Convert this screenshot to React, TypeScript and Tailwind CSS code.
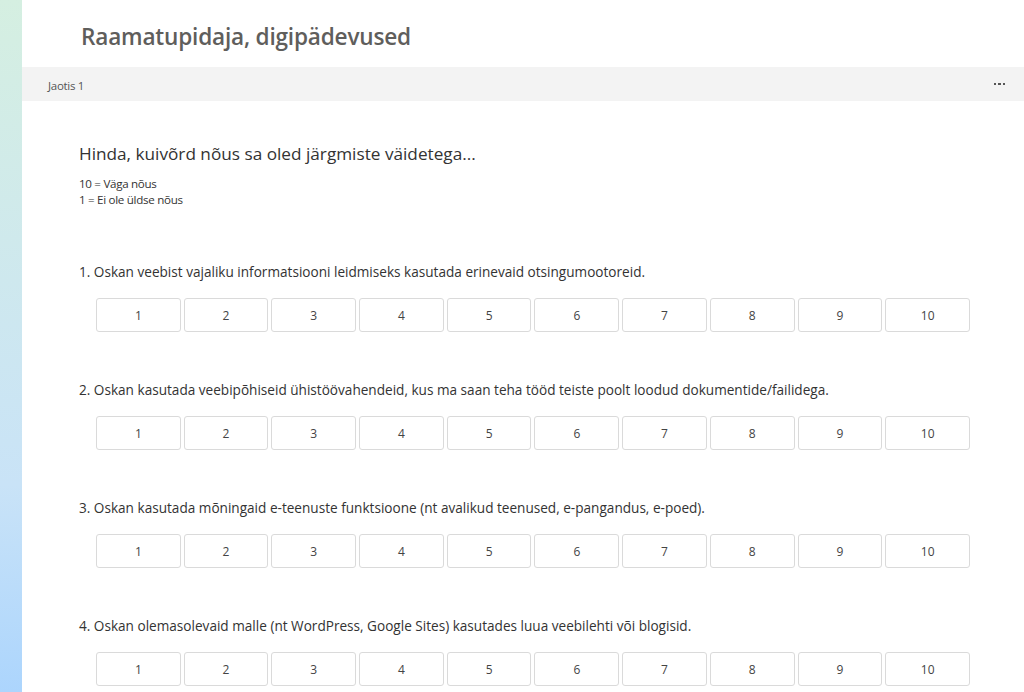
const questions = [
  '1. Oskan veebist vajaliku informatsiooni leidmiseks kasutada erinevaid otsingumootoreid.',
  '2. Oskan kasutada veebipõhiseid ühistöövahendeid, kus ma saan teha tööd teiste poolt loodud dokumentide/failidega.',
  '3. Oskan kasutada mõningaid e-teenuste funktsioone (nt avalikud teenused, e-pangandus, e-poed).',
  '4. Oskan olemasolevaid malle (nt WordPress, Google Sites) kasutades luua veebilehti või blogisid.',
]

const scale = [1, 2, 3, 4, 5, 6, 7, 8, 9, 10]

export default function App() {
  return (
    <div
      className="flex h-[692px] w-[1024px] overflow-hidden bg-white text-[#333]"
      style={{ fontFamily: '"Open Sans", "Noto Sans", sans-serif' }}
    >
      {/* side gradient */}
      <div className="w-[22px] shrink-0 bg-gradient-to-b from-[#d5efe1] via-[#c9e3f7] via-70% to-[#acd5fd]" />

      <div className="flex-1 min-w-0">
        <div className="flex h-[67px] items-center pl-[59px] pt-[6px]">
          <h1 className="text-[22.6px] font-semibold tracking-[-0.2px] text-[#5f5e5c]">
            Raamatupidaja, digipädevused
          </h1>
        </div>

        <div className="flex h-[34px] items-center justify-between bg-[#f3f3f3] pl-[26px] pr-[19px]">
          <span className="pt-[3px] text-[11.5px] tracking-[-0.3px] text-[#555]">Jaotis 1</span>
          <span className="flex gap-[2px]">
            <span className="h-[2.5px] w-[2.5px] bg-[#555]" />
            <span className="h-[2.5px] w-[2.5px] bg-[#555]" />
            <span className="h-[2.5px] w-[2.5px] bg-[#555]" />
          </span>
        </div>

        <div className="pl-[57px] pt-[41px]">
          <h2 className="text-[17.2px] leading-[24px] text-[#333]">
            Hinda, kuivõrd nõus sa oled järgmiste väidetega...
          </h2>
          <div className="mt-[10px] text-[11.6px] leading-[16px] tracking-[-0.3px] text-[#333]">
            <div>10 = Väga nõus</div>
            <div>1 = Ei ole üldse nõus</div>
          </div>

          <div className="mt-[54px] flex flex-col gap-[48px]">
            {questions.map(q => (
              <div key={q}>
                <p className="text-[13.6px] leading-[20px] text-[#333]">{q}</p>
                <div className="ml-[17px] mt-4 grid w-[874px] grid-cols-10 gap-[3px]">
                  {scale.map(n => (
                    <button
                      key={n}
                      className="h-[34px] rounded-[3px] border border-[#dadada] bg-white pt-[2px] text-[12px] text-[#444]"
                    >
                      {n}
                    </button>
                  ))}
                </div>
              </div>
            ))}
          </div>
        </div>
      </div>
    </div>
  )
}
